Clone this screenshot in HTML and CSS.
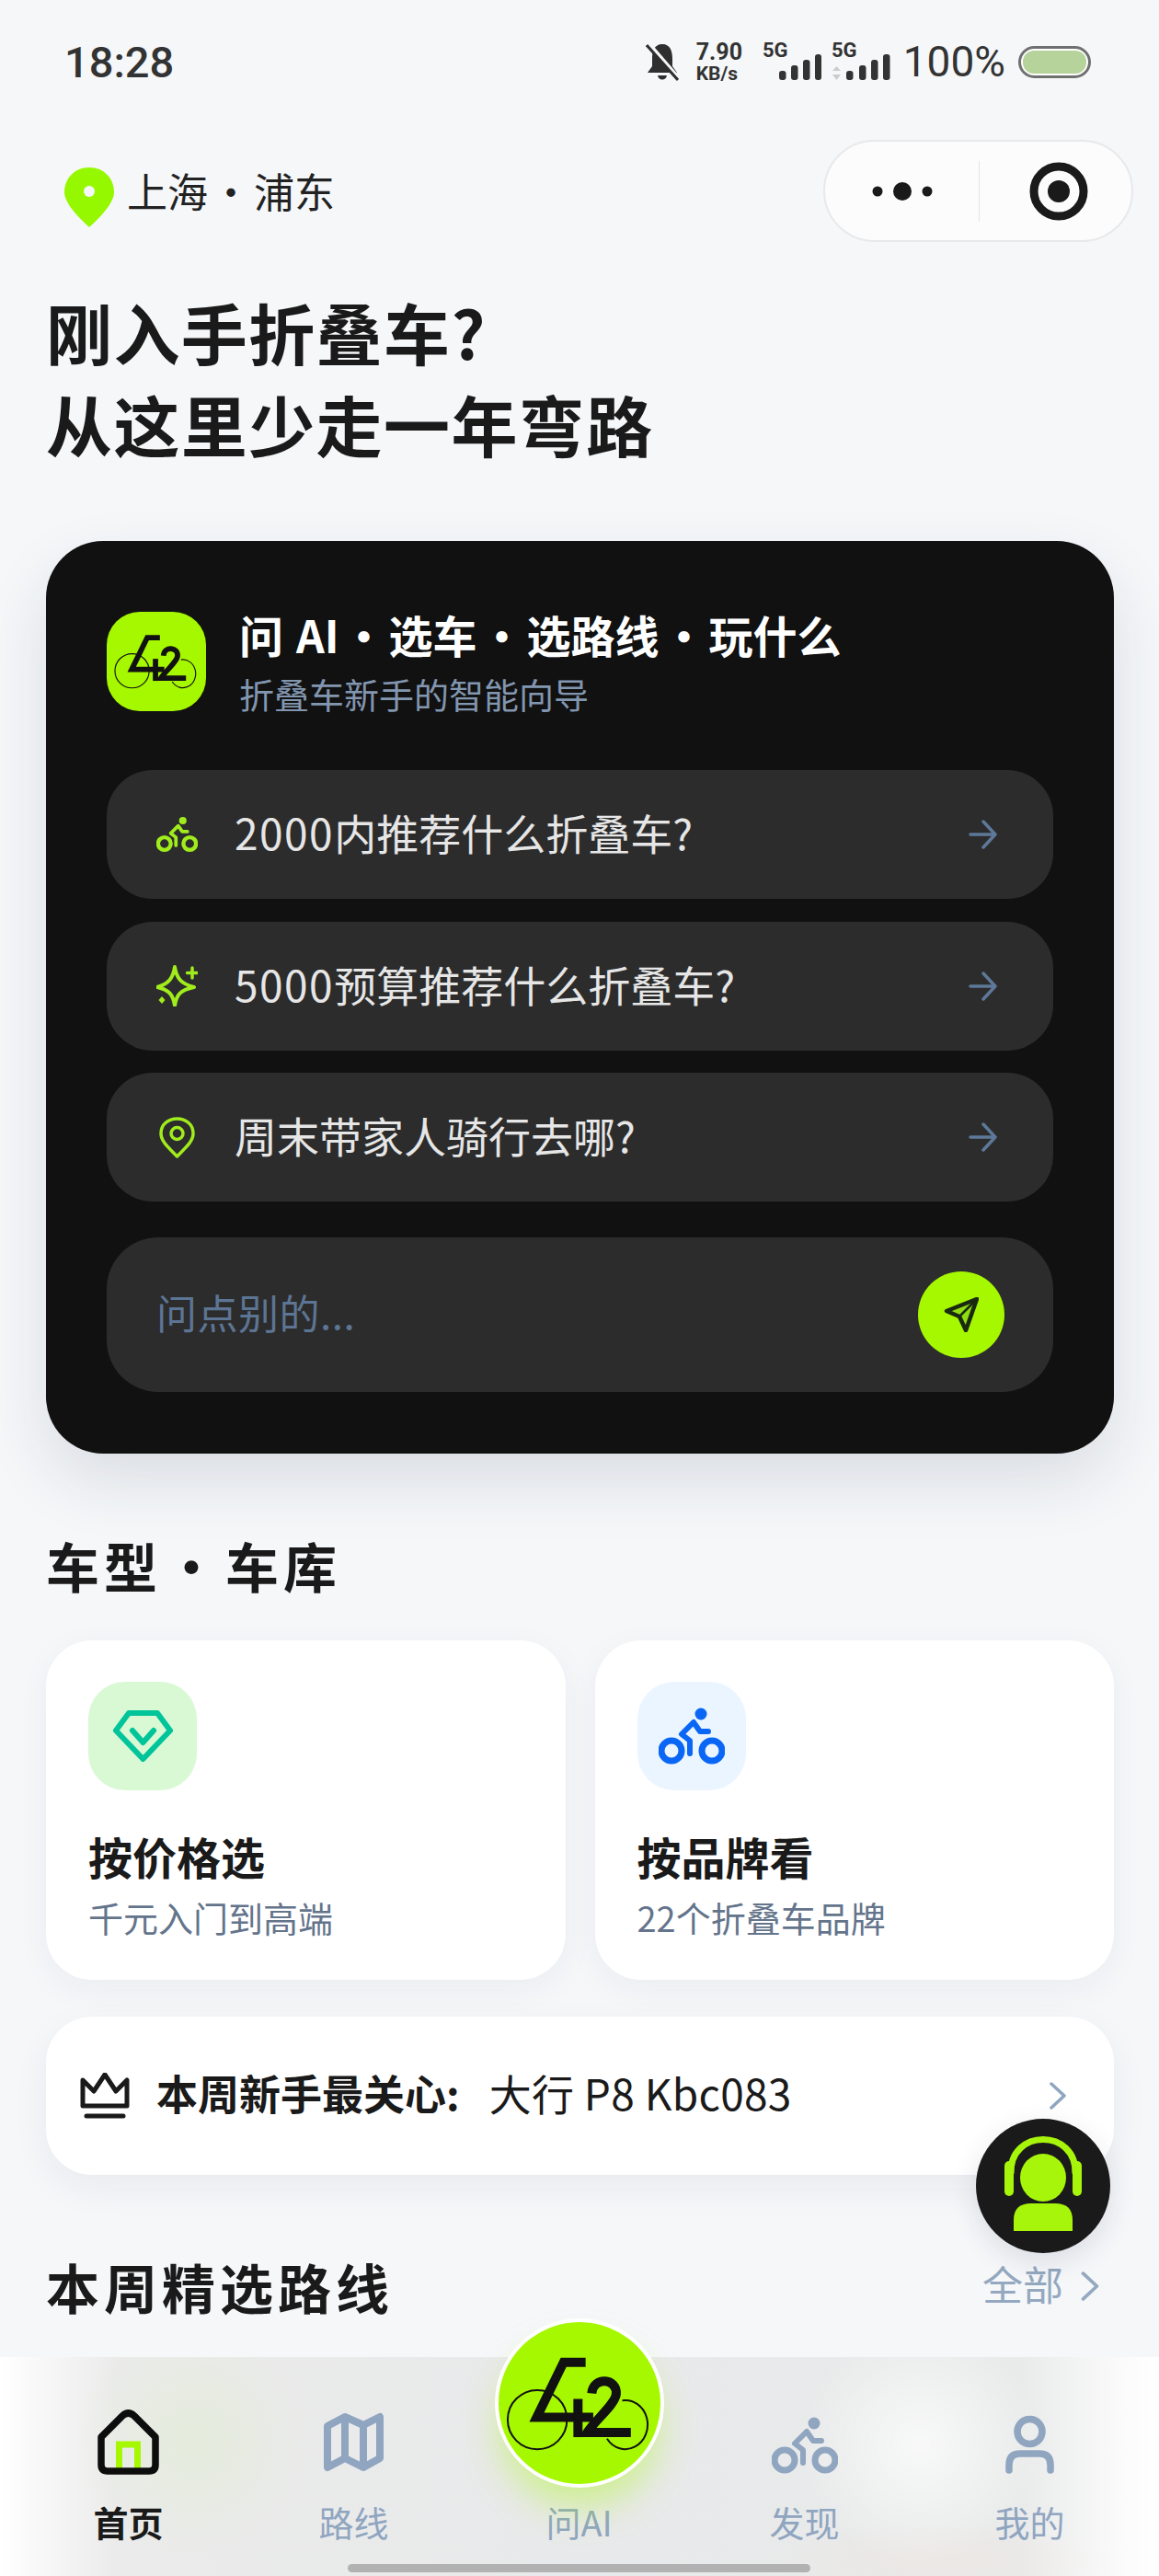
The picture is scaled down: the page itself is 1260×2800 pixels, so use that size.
FILE: index.html
```html
<!DOCTYPE html>
<html lang="zh-CN">
<head>
    <meta charset="UTF-8">
    <meta name="viewport" content="width=device-width, initial-scale=1.0">
    <title>折叠车新手指南</title>
    <link rel="stylesheet" href="styles.css">
</head>
<body>
    <svg class="icon-defs" aria-hidden="true">
        <symbol id="logo42" viewBox="60 150 480 310">
            <circle cx="162" cy="358" r="97" fill="none" stroke="#111" stroke-width="6"/>
            <path d="M440 295 A73 80 0 1 1 390 420" fill="none" stroke="#111" stroke-width="6"/>
            <polyline points="320,170 248,170 160,350 345,350" fill="none" stroke="#111" stroke-width="30"/>
            <line x1="295" y1="290" x2="295" y2="415" stroke="#111" stroke-width="30"/>
            <path d="M340 272 C345 215 425 222 420 275 C415 310 350 360 325 400 L468 400" fill="none" stroke="#111" stroke-width="30"/>
        </symbol>
        <symbol id="bike" viewBox="0 0 72 62">
            <circle cx="14" cy="47" r="11" fill="none" stroke="currentColor" stroke-width="7"/>
            <circle cx="58" cy="47" r="11" fill="none" stroke="currentColor" stroke-width="7"/>
            <circle cx="46" cy="7" r="6.5" fill="currentColor"/>
            <path d="M54 26 H45 L38 16 L25 29 L34 36 V50" fill="none" stroke="currentColor" stroke-width="6" stroke-linecap="round" stroke-linejoin="round"/>
        </symbol>
        <symbol id="arrow" viewBox="0 0 32 32">
            <path d="M2 16 H29 M16 2 L29 16 L16 30" fill="none" stroke="currentColor" stroke-width="3.5" stroke-linecap="round" stroke-linejoin="round"/>
        </symbol>
        <symbol id="chevron" viewBox="0 0 20 30">
            <path d="M3 2 L17 15 L3 28" fill="none" stroke="currentColor" stroke-width="3.5" stroke-linecap="round" stroke-linejoin="round"/>
        </symbol>
    </svg>

    <div class="page">
        <div class="status-bar">
            <span class="status-time">18:28</span>
            <div class="status-icons">
                <svg class="status-bell" viewBox="0 0 36 41">
                    <path d="M18 1 C27 1 29 9 29 17 V25 L34 32 H2 L7 25 V17 C7 9 9 1 18 1Z M13 35 H23 C22 41 14 41 13 35Z" fill="#2f2f2f"/>
                    <line x1="4" y1="1" x2="36" y2="38" stroke="#f5f7f9" stroke-width="4"/>
                    <line x1="1" y1="2" x2="35" y2="40" stroke="#2f2f2f" stroke-width="3"/>
                </svg>
                <div class="status-speed">
                    <span class="speed-value">7.90</span>
                    <span class="speed-unit">KB/s</span>
                </div>
                <svg class="status-signal" viewBox="0 -6 64 48">
                    <text x="0" y="16" class="signal-label">5G</text>
                    <rect x="18" y="31" width="7.5" height="10" rx="3" fill="#333"/>
                    <rect x="31" y="25" width="7.5" height="16" rx="3" fill="#333"/>
                    <rect x="44" y="19" width="7.5" height="22" rx="3" fill="#333"/>
                    <rect x="57" y="13" width="7" height="28" rx="3" fill="#333"/>
                </svg>
                <svg class="status-signal signal-second" viewBox="0 -6 64 48">
                    <text x="0" y="16" class="signal-label">5G</text>
                    <path d="M5.5 26 L10 31 H1Z M5.5 41 L10 35 H1Z" fill="#ccc"/>
                    <rect x="16" y="31" width="7.5" height="10" rx="3" fill="#333"/>
                    <rect x="30" y="25" width="7.5" height="16" rx="3" fill="#333"/>
                    <rect x="43" y="19" width="7.5" height="22" rx="3" fill="#333"/>
                    <rect x="56" y="13" width="7.5" height="28" rx="3" fill="#333"/>
                </svg>
                <span class="status-pct">100%</span>
                <div class="status-battery"><div class="battery-fill"></div></div>
            </div>
        </div>

        <div class="top-row">
            <div class="location">
                <svg class="location-pin" viewBox="0 0 54 65">
                    <path d="M27 0 C43 0 54 12 54 27 C54 39 38 55 27 65 C16 55 0 39 0 27 C0 12 11 0 27 0Z" fill="#96f800"/>
                    <circle cx="27" cy="26" r="6" fill="#f5f7f9"/>
                </svg>
                <span class="location-text">上海<span class="dot">·</span>浦东</span>
            </div>
            <div class="capsule">
                <svg class="capsule-dots" viewBox="0 0 66 24">
                    <circle cx="6" cy="12" r="5.5" fill="#1a1a1a"/>
                    <circle cx="33" cy="12" r="10" fill="#1a1a1a"/>
                    <circle cx="60" cy="12" r="5.5" fill="#1a1a1a"/>
                </svg>
                <div class="capsule-line"></div>
                <svg class="capsule-target" viewBox="0 0 64 64">
                    <circle cx="32" cy="32" r="27" fill="none" stroke="#1a1a1a" stroke-width="9"/>
                    <circle cx="32" cy="32" r="12" fill="#1a1a1a"/>
                </svg>
            </div>
        </div>

        <h1 class="headline">刚入手折叠车?<br>从这里少走一年弯路</h1>

        <div class="ai-card">
            <div class="ai-head">
                <div class="ai-logo"><svg class="ai-logo-mark"><use href="#logo42"/></svg></div>
                <div>
                    <div class="ai-title">问 AI<span class="dot">·</span>选车<span class="dot">·</span>选路线<span class="dot">·</span>玩什么</div>
                    <div class="ai-sub">折叠车新手的智能向导</div>
                </div>
            </div>
            <div class="ai-rows">
                <div class="ai-row">
                    <svg class="ai-row-icon row-bike"><use href="#bike"/></svg>
                    <span class="ai-row-text"><span class="ai-num">2000</span>内推荐什么折叠车?</span>
                    <svg class="ai-row-arrow"><use href="#arrow"/></svg>
                </div>
                <div class="ai-row">
                    <svg class="ai-row-icon" viewBox="0 0 45 45">
                        <path d="M20 2 C22 14 26 20 41 24 C26 27 22 32 20 44 C18 32 14 27 1 24 C14 20 18 14 20 2Z" fill="none" stroke="#a0ec1c" stroke-width="4" stroke-linejoin="round"/>
                        <path d="M39 3 V14 M33.5 8.5 H44.5" stroke="#a0ec1c" stroke-width="3.5" stroke-linecap="round"/>
                        <path d="M6 34 L9.5 38 L6 42 L2.5 38Z" fill="#a0ec1c"/>
                    </svg>
                    <span class="ai-row-text"><span class="ai-num">5000</span>预算推荐什么折叠车?</span>
                    <svg class="ai-row-arrow"><use href="#arrow"/></svg>
                </div>
                <div class="ai-row">
                    <svg class="ai-row-icon" viewBox="0 0 45 45">
                        <path d="M22.5 43 C14 34 5 27 5 18 C5 8 13 2 22.5 2 C32 2 40 8 40 18 C40 27 31 34 22.5 43Z" fill="none" stroke="#a0ec1c" stroke-width="3.5" stroke-linejoin="round"/>
                        <circle cx="22.5" cy="18" r="6.5" fill="none" stroke="#a0ec1c" stroke-width="3.5"/>
                    </svg>
                    <span class="ai-row-text">周末带家人骑行去哪?</span>
                    <svg class="ai-row-arrow"><use href="#arrow"/></svg>
                </div>
            </div>
            <div class="ai-input">
                <span class="ai-placeholder">问点别的...</span>
                <div class="ai-send">
                    <svg class="ai-send-icon" viewBox="0 0 38 38">
                        <path d="M36 2 L3 15 L17 21 L24 36Z" fill="#8fdc10" stroke="#1a2a10" stroke-width="4.5" stroke-linejoin="round"/>
                        <line x1="17" y1="21" x2="36" y2="2" stroke="#1a2a10" stroke-width="2.5"/>
                    </svg>
                </div>
            </div>
        </div>

        <h2 class="section-title">车型<span class="dot">·</span>车库</h2>
        <div class="pick-grid">
            <div class="pick-card">
                <div class="pick-icon pick-green">
                    <svg class="gem-icon" viewBox="0 0 65 57">
                        <path d="M17 3 H48 L62 22 L32.5 53 L3 22Z" fill="none" stroke="#00c49a" stroke-width="6" stroke-linejoin="round"/>
                        <path d="M21 22 L32.5 35 L44 22" fill="none" stroke="#00c49a" stroke-width="6" stroke-linecap="round" stroke-linejoin="round"/>
                    </svg>
                </div>
                <div class="pick-title">按价格选</div>
                <div class="pick-sub">千元入门到高端</div>
            </div>
            <div class="pick-card">
                <div class="pick-icon pick-blue">
                    <svg class="pick-bike"><use href="#bike"/></svg>
                </div>
                <div class="pick-title">按品牌看</div>
                <div class="pick-sub">22个折叠车品牌</div>
            </div>
        </div>

        <div class="hot-banner">
            <svg class="crown-icon" viewBox="0 0 54 51">
                <path d="M3 8 L15 20 L27 2 L39 20 L51 8 V36 H3Z" fill="none" stroke="#1a1a1a" stroke-width="5" stroke-linejoin="round"/>
                <line x1="7" y1="47" x2="47" y2="47" stroke="#1a1a1a" stroke-width="5" stroke-linecap="round"/>
            </svg>
            <span class="hot-label">本周新手最关心:</span>
            <span class="hot-value">大行 P8 Kbc083</span>
            <svg class="hot-chevron"><use href="#chevron"/></svg>
        </div>

        <div class="section-row">
            <h2 class="section-title">本周精选路线</h2>
            <div class="section-more">全部<svg class="more-chevron"><use href="#chevron"/></svg></div>
        </div>

        <div class="float-help">
            <svg viewBox="0 0 146 146" class="float-icon">
                <path d="M38 60 C36 10 110 10 108 60" fill="none" stroke="#a6f50a" stroke-width="7"/>
                <ellipse cx="73" cy="64" rx="25" ry="26" fill="#a6f50a"/>
                <rect x="31" y="46" width="10" height="38" rx="5" fill="#a6f50a"/>
                <rect x="105" y="46" width="10" height="38" rx="5" fill="#a6f50a"/>
                <path d="M41 122 V110 Q41 92 60 92 H86 Q105 92 105 110 V122Z" fill="#a6f50a"/>
            </svg>
        </div>

        <nav class="tab-bar">
            <div class="tab">
                <svg class="tab-icon" viewBox="0 0 67 71">
                    <path d="M23.5 64 V38 H43.5 V64" fill="none" stroke="#a6f800" stroke-width="7"/>
                    <path d="M4 30 L27 7 Q33.5 1 40 7 L63 30 V60 Q63 67 56 67 H11 Q4 67 4 60Z" fill="none" stroke="#0d0d0d" stroke-width="7.5" stroke-linejoin="round"/>
                </svg>
                <span class="tab-label tab-active">首页</span>
            </div>
            <div class="tab">
                <svg class="tab-icon" viewBox="0 0 67 71">
                    <path d="M5 18 L24 8 L44 17 L62 8 V53 L44 63 L24 53 L5 63Z M24 8 V53 M44 17 V63" fill="none" stroke="#8fa5c0" stroke-width="8" stroke-linejoin="round"/>
                </svg>
                <span class="tab-label">路线</span>
            </div>
            <div class="tab">
                <div class="tab-icon"></div>
                <span class="tab-label">问AI</span>
            </div>
            <div class="tab">
                <svg class="tab-icon tab-bike"><use href="#bike"/></svg>
                <span class="tab-label">发现</span>
            </div>
            <div class="tab">
                <svg class="tab-icon" viewBox="0 0 67 71">
                    <circle cx="33.5" cy="24" r="13.5" fill="none" stroke="#8fa5c0" stroke-width="7.5"/>
                    <path d="M11 66 V60 Q11 48 23 48 H44 Q56 48 56 60 V66" fill="none" stroke="#8fa5c0" stroke-width="7.5" stroke-linecap="round"/>
                </svg>
                <span class="tab-label">我的</span>
            </div>
            <div class="tab-center"><svg class="tab-center-mark"><use href="#logo42"/></svg></div>
            <div class="home-indicator"></div>
        </nav>
    </div>
</body>
</html>
```

FILE: styles.css
```css
:root {
    --lime: #a6f800;
    --page-bg: #f5f7f9;
    --ink: #1a1a1a;
    --muted: #64748b;
    --tab-grey: #8fa5c0;
}
* {
    box-sizing: border-box;
}
body {
    margin: 0;
    background-color: var(--page-bg);
    color: var(--ink);
    font-family: "Noto Sans CJK SC", "Noto Sans", sans-serif;
}
.icon-defs {
    position: absolute;
    width: 0;
    height: 0;
}
.page {
    position: relative;
    width: 1260px;
    height: 2800px;
    overflow: hidden;
    background-color: var(--page-bg);
}
.dot {
    margin: 0 3px;
}

/* status bar */
.status-bar {
    display: flex;
    align-items: center;
    justify-content: space-between;
    height: 134px;
    padding: 0 74px 0 70px;
    font-family: Roboto, sans-serif;
    color: #333;
}
.status-time {
    font-size: 47px;
    font-weight: 500;
}
.status-icons {
    display: flex;
    align-items: center;
    gap: 14px;
}
.status-bell {
    width: 36px;
    height: 41px;
    margin-right: 5px;
}
.status-speed {
    display: flex;
    flex-direction: column;
    width: 56px;
    margin-right: 2px;
    font-weight: 700;
    line-height: 1;
}
.speed-value {
    font-size: 25px;
}
.speed-unit {
    font-size: 21px;
    margin-top: 1px;
}
.status-signal {
    width: 64px;
    height: 48px;
    margin-top: -6px;
}
.signal-second {
    margin-left: -3px;
}
.signal-label {
    font-family: Roboto, sans-serif;
    font-size: 22px;
    font-weight: 700;
    fill: #333;
}
.status-pct {
    font-size: 46px;
    line-height: 1;
}
.status-battery {
    width: 79px;
    height: 35px;
    padding: 2px;
    border: 3px solid #707070;
    border-radius: 18px;
    background-color: #fff;
}
.battery-fill {
    height: 100%;
    border-radius: 12px;
    background-color: #b6d39b;
}

/* location row */
.top-row {
    display: flex;
    align-items: center;
    justify-content: space-between;
    margin-top: 18px;
    padding: 0 28px 0 70px;
}
.location {
    display: flex;
    align-items: center;
    gap: 14px;
}
.location-pin {
    width: 54px;
    height: 65px;
    margin-top: 14px;
}
.location-text {
    padding-bottom: 2px;
    font-size: 44px;
    color: #222;
}
.capsule {
    display: flex;
    align-items: center;
    width: 337px;
    height: 111px;
    padding-left: 51px;
    border: 2px solid #e8e9eb;
    border-radius: 56px;
    background-color: #fcfcfc;
}
.capsule-dots {
    width: 66px;
    height: 24px;
}
.capsule-line {
    width: 1px;
    height: 66px;
    margin-left: 50px;
    background-color: #e4e5e7;
}
.capsule-target {
    width: 64px;
    height: 64px;
    margin-left: 54px;
}

.headline {
    margin: 47px 0 0 50px;
    font-size: 72px;
    font-weight: 700;
    line-height: 100px;
    letter-spacing: 1.4px;
}

/* AI card */
.ai-card {
    margin: 78px 49px 0 50px;
    padding: 77px 66px 67px;
    border-radius: 62px;
    background-color: #111;
    box-shadow: 0 30px 70px rgba(30, 40, 70, 0.12);
}
.ai-head {
    display: flex;
    gap: 36px;
}
.ai-logo {
    display: flex;
    align-items: center;
    justify-content: center;
    width: 108px;
    height: 108px;
    border-radius: 36px;
    background-color: var(--lime);
}
.ai-logo-mark {
    width: 92px;
    height: 60px;
}
.ai-title {
    margin-top: -3px;
    font-size: 48px;
    font-weight: 700;
    line-height: 54px;
    color: #fff;
    word-spacing: 3px;
}
.ai-sub {
    margin-top: 22px;
    font-size: 38px;
    line-height: 32px;
    color: #8296b0;
}
.ai-rows {
    display: flex;
    flex-direction: column;
    gap: 24.5px;
    margin-top: 64px;
}
.ai-row {
    display: flex;
    align-items: center;
    height: 140px;
    padding: 0 60px 0 54px;
    border-radius: 50px;
    background-color: #2c2c2c;
}
.ai-row-icon {
    flex: none;
    width: 45px;
    height: 45px;
}
.row-bike {
    height: 40px;
    color: #a0ec1c;
}
.ai-row-text {
    flex: 1;
    margin-left: 40px;
    padding-bottom: 6px;
    font-size: 46px;
    color: #e6e6e6;
}
.ai-num {
    letter-spacing: 1.5px;
}
.ai-row-arrow {
    width: 32px;
    height: 32px;
    color: #5d7898;
}
.ai-input {
    display: flex;
    align-items: center;
    justify-content: space-between;
    height: 168px;
    margin-top: 39px;
    padding: 0 53px 0 54px;
    border-radius: 56px;
    background-color: #2c2c2c;
}
.ai-placeholder {
    padding-bottom: 6px;
    font-size: 44px;
    letter-spacing: 0.5px;
    color: #5d7594;
}
.ai-send {
    display: flex;
    align-items: center;
    justify-content: center;
    width: 94px;
    height: 94px;
    border-radius: 50%;
    background-color: var(--lime);
}
.ai-send-icon {
    width: 38px;
    height: 38px;
}

/* sections */
.section-title {
    margin: 81px 0 0 50px;
    padding-bottom: 3px;
    font-size: 58px;
    font-weight: 700;
    line-height: 80px;
    letter-spacing: 5px;
}
.pick-grid {
    display: grid;
    grid-template-columns: 1fr 1fr;
    gap: 32px;
    margin: 39px 49px 0 50px;
}
.pick-card {
    height: 369px;
    padding: 45px 46px 0;
    border-radius: 50px;
    background-color: #fff;
    box-shadow: 0 10px 36px rgba(30, 40, 70, 0.05);
}
.pick-icon {
    display: flex;
    align-items: center;
    justify-content: center;
    width: 118px;
    height: 118px;
    border-radius: 40px;
}
.pick-green {
    background-color: #d9f8d4;
}
.pick-blue {
    background-color: #ebf5ff;
}
.gem-icon {
    width: 65px;
    height: 57px;
}
.pick-bike {
    width: 72px;
    height: 62px;
    color: #0a66f5;
}
.pick-title {
    margin-top: 38px;
    font-size: 48px;
    font-weight: 700;
    line-height: 66px;
}
.pick-sub {
    margin-top: 8px;
    font-size: 38px;
    line-height: 52px;
    color: var(--muted);
}
.hot-banner {
    display: flex;
    align-items: center;
    height: 172px;
    margin: 40px 49px 0 50px;
    padding: 0 51px 0 37px;
    border-radius: 50px;
    background-color: #fff;
    box-shadow: 0 14px 40px rgba(30, 40, 70, 0.06);
}
.crown-icon {
    width: 54px;
    height: 51px;
}
.hot-label {
    margin-left: 29px;
    padding-bottom: 8px;
    font-size: 45px;
    font-weight: 700;
}
.hot-value {
    flex: 1;
    margin-left: 32px;
    padding-bottom: 8px;
    font-size: 46px;
    letter-spacing: 0.3px;
}
.hot-chevron {
    width: 20px;
    height: 30px;
    color: var(--tab-grey);
}
.section-row {
    display: flex;
    align-items: flex-end;
    justify-content: space-between;
    padding-right: 64px;
}
.section-more {
    display: flex;
    align-items: center;
    gap: 18px;
    padding-bottom: 6px;
    font-size: 44px;
    line-height: 80px;
    color: #94a8c0;
}
.more-chevron {
    width: 22px;
    height: 32px;
    margin-top: 6px;
}

/* floating help button */
.float-help {
    position: absolute;
    left: 1061px;
    top: 2303px;
    width: 146px;
    height: 146px;
    border-radius: 50%;
    background-color: #1a1a1a;
    box-shadow: 0 10px 30px rgba(30, 40, 70, 0.12);
}
.float-icon {
    display: block;
    width: 146px;
    height: 146px;
}

/* tab bar */
.tab-bar {
    position: absolute;
    left: 0;
    bottom: 0;
    display: grid;
    grid-template-columns: repeat(5, 245px);
    width: 100%;
    height: 238px;
    padding: 57px 18px 0 17px;
    background:
        radial-gradient(circle at 1000px 95px, rgba(255, 255, 255, 0.7), transparent 130px),
        radial-gradient(circle at 210px 90px, rgba(205, 240, 160, 0.2), transparent 130px),
        radial-gradient(ellipse at 1020px 220px, rgba(245, 225, 210, 0.25), transparent 180px),
        linear-gradient(90deg, #fff 0, #fbfbfb 2%, #ebebeb 10%, #e8e9ea 50%, #e9eaea 88%, #fbfbfb 97%, #fff 100%);
}
.tab {
    display: flex;
    flex-direction: column;
    align-items: center;
}
.tab-icon {
    width: 67px;
    height: 71px;
}
.tab-bike {
    width: 72px;
    height: 62px;
    margin: 8px 0 1px;
    color: var(--tab-grey);
}
.tab-label {
    margin-top: 26px;
    font-size: 38px;
    line-height: 50px;
    color: var(--tab-grey);
}
.tab-active {
    font-weight: 700;
    color: var(--ink);
}
.tab-center {
    position: absolute;
    left: 538px;
    top: -42px;
    display: flex;
    align-items: center;
    justify-content: center;
    width: 184px;
    height: 184px;
    border: 4px solid #fff;
    border-radius: 50%;
    background-color: var(--lime);
    box-shadow: 0 26px 40px -6px rgba(166, 248, 0, 0.4);
}
.tab-center-mark {
    width: 160px;
    height: 103px;
}
.home-indicator {
    position: absolute;
    left: 378px;
    bottom: 4px;
    width: 503px;
    height: 9px;
    border-radius: 5px;
    background-color: #b2b2b2;
}
```
